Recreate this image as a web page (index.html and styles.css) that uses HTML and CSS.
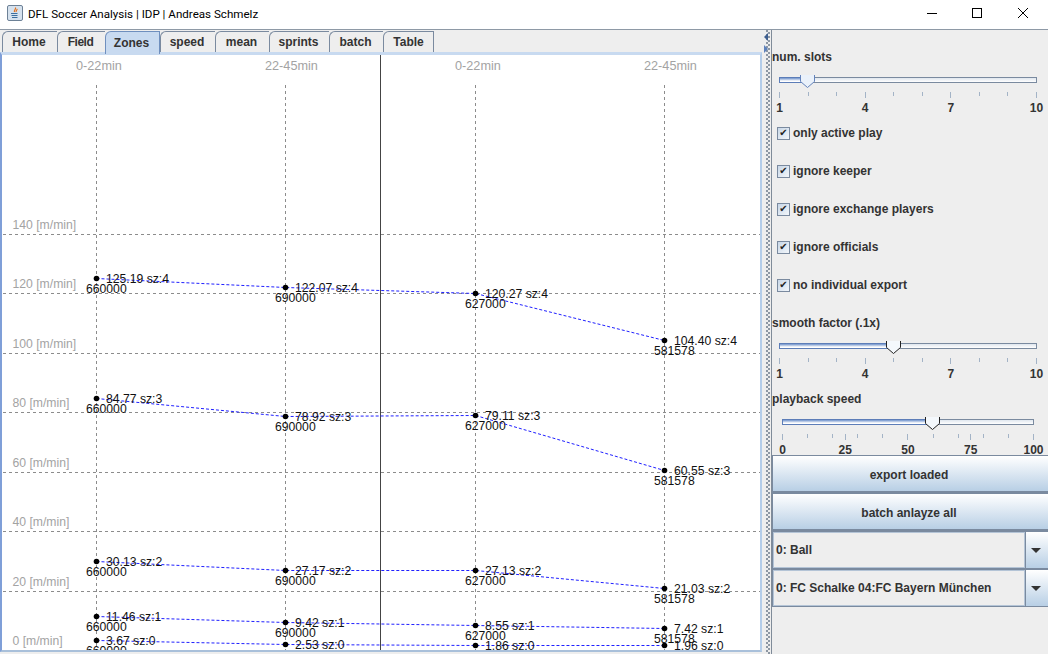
FILE: index.html
```html
<!DOCTYPE html>
<html lang="en">
<head>
    <meta charset="UTF-8">
    <meta name="viewport" content="width=device-width, initial-scale=1.0">
    <title>DFL Soccer Analysis | IDP | Andreas Schmelz</title>
    <link rel="stylesheet" href="styles.css">
</head>
<body>
    <!-- Window title bar -->
    <header class="titlebar">
        <svg class="app-icon" width="16" height="16" viewBox="0 0 16 16">
            <rect x="0.5" y="0.5" width="15" height="15" rx="1.5" fill="#d6e2ee" stroke="#6d8196"/>
            <path d="M8.5 2.5c1 1.5-2 2.5-1 4.5M10 4c.5 1-1.5 1.5-.8 3" fill="none" stroke="#e2701c" stroke-width="1.2"/>
            <path d="M4 8.5h6.5M4.5 10.5h6M5 12.5h5.5" stroke="#3c6f9e" stroke-width="1.1"/>
        </svg>
        <span class="app-title">DFL Soccer Analysis | IDP | Andreas Schmelz</span>
        <div class="window-buttons">
            <svg width="12" height="12" viewBox="0 0 12 12"><path d="M1 6.5h10" stroke="#000"/></svg>
            <svg width="12" height="12" viewBox="0 0 12 12"><rect x="1.5" y="1.5" width="9" height="9" fill="none" stroke="#000"/></svg>
            <svg class="close-icon" width="12" height="12" viewBox="0 0 12 12"><path d="M1 1l10 10M11 1L1 11" stroke="#000"/></svg>
        </div>
    </header>

    <div class="app">
        <!-- Left: tabs with chart -->
        <div class="tab-pane">
            <nav class="tabs">
                <span class="tab tab-home">Home</span>
                <span class="tab tab-field">Field</span>
                <span class="tab tab-zones active">Zones</span>
                <span class="tab tab-speed">speed</span>
                <span class="tab tab-mean">mean</span>
                <span class="tab tab-sprints">sprints</span>
                <span class="tab tab-batch">batch</span>
                <span class="tab tab-table">Table</span>
            </nav>
            <div class="tab-body">
                <svg class="chart" viewBox="2 55 758 595">
                    <g class="grid">
                        <path d="M3 234.5H760M3 293.5H760M3 353.5H760M3 412.5H760M3 472.5H760M3 531.5H760M3 591.5H760M3 650.5H760"/>
                        <path d="M96.5 85V650M285.5 85V650M475.5 85V650M664.5 85V650"/>
                    </g>
                    <path class="divider-line" d="M380.5 55V650"/>

                    <g class="columns">
                        <text x="76" y="70">0-22min</text>
                        <text x="265" y="70">22-45min</text>
                        <text x="455" y="70">0-22min</text>
                        <text x="644" y="70">22-45min</text>
                    </g>
                    <g class="axis">
                        <text x="12.5" y="229">140 [m/min]</text>
                        <text x="12.5" y="288">120 [m/min]</text>
                        <text x="12.5" y="348">100 [m/min]</text>
                        <text x="12.5" y="407">80 [m/min]</text>
                        <text x="12.5" y="467">60 [m/min]</text>
                        <text x="12.5" y="526">40 [m/min]</text>
                        <text x="12.5" y="586">20 [m/min]</text>
                        <text x="12.5" y="645">0 [m/min]</text>
                    </g>

                    <g class="series">
                        <polyline points="96.5,278.5 285.5,287.5 475.5,293.5 664.5,340.5"/>
                        <polyline points="96.5,398.5 285.5,416.5 475.5,415.5 664.5,470.5"/>
                        <polyline points="96.5,561.5 285.5,570.5 475.5,570.5 664.5,588.5"/>
                        <polyline points="96.5,616.5 285.5,622.5 475.5,625.5 664.5,628.5"/>
                        <polyline points="96.5,640.5 285.5,644.5 475.5,645.5 664.5,645.5"/>
                    </g>

                    <g class="dots">
                        <circle cx="96.5" cy="278.5" r="2.8"/><circle cx="285.5" cy="287.5" r="2.8"/><circle cx="475.5" cy="293.5" r="2.8"/><circle cx="664.5" cy="340.5" r="2.8"/>
                        <circle cx="96.5" cy="398.5" r="2.8"/><circle cx="285.5" cy="416.5" r="2.8"/><circle cx="475.5" cy="415.5" r="2.8"/><circle cx="664.5" cy="470.5" r="2.8"/>
                        <circle cx="96.5" cy="561.5" r="2.8"/><circle cx="285.5" cy="570.5" r="2.8"/><circle cx="475.5" cy="570.5" r="2.8"/><circle cx="664.5" cy="588.5" r="2.8"/>
                        <circle cx="96.5" cy="616.5" r="2.8"/><circle cx="285.5" cy="622.5" r="2.8"/><circle cx="475.5" cy="625.5" r="2.8"/><circle cx="664.5" cy="628.5" r="2.8"/>
                        <circle cx="96.5" cy="640.5" r="2.8"/><circle cx="285.5" cy="644.5" r="2.8"/><circle cx="475.5" cy="645.5" r="2.8"/><circle cx="664.5" cy="645.5" r="2.8"/>
                    </g>

                    <g class="values">
                        <text x="106" y="283">125.19 sz:4</text><text x="86" y="293">660000</text>
                        <text x="295" y="292">122.07 sz:4</text><text x="275" y="302">690000</text>
                        <text x="485" y="298">120.27 sz:4</text><text x="465" y="308">627000</text>
                        <text x="674" y="345">104.40 sz:4</text><text x="654" y="355">581578</text>

                        <text x="106" y="403">84.77 sz:3</text><text x="86" y="413">660000</text>
                        <text x="295" y="421">78.92 sz:3</text><text x="275" y="431">690000</text>
                        <text x="485" y="420">79.11 sz:3</text><text x="465" y="430">627000</text>
                        <text x="674" y="475">60.55 sz:3</text><text x="654" y="485">581578</text>

                        <text x="106" y="566">30.13 sz:2</text><text x="86" y="576">660000</text>
                        <text x="295" y="575">27.17 sz:2</text><text x="275" y="585">690000</text>
                        <text x="485" y="575">27.13 sz:2</text><text x="465" y="585">627000</text>
                        <text x="674" y="593">21.03 sz:2</text><text x="654" y="603">581578</text>

                        <text x="106" y="621">11.46 sz:1</text><text x="86" y="631">660000</text>
                        <text x="295" y="627">9.42 sz:1</text><text x="275" y="637">690000</text>
                        <text x="485" y="630">8.55 sz:1</text><text x="465" y="640">627000</text>
                        <text x="674" y="633">7.42 sz:1</text><text x="654" y="643">581578</text>

                        <text x="106" y="645">3.67 sz:0</text><text x="86" y="655">660000</text>
                        <text x="295" y="649">2.53 sz:0</text><text x="275" y="659">690000</text>
                        <text x="485" y="650">1.86 sz:0</text>
                        <text x="674" y="650">1.96 sz:0</text>
                    </g>
                </svg>
            </div>
        </div>

        <!-- Split pane divider -->
        <div class="splitter">
            <span class="arrow-left"></span>
            <span class="arrow-right"></span>
        </div>

        <!-- Right: settings -->
        <aside class="side">
            <div class="label label-slots">num. slots</div>
            <div class="slider slider-wide">
                <div class="track">
                    <div class="fill" style="width: 11.11%"></div>
                    <svg class="thumb focused" style="left: 11.11%" width="15" height="13" viewBox="0 0 15 13"><path d="M.5 0V6.5L7.5 12.5L14.5 6.5V0"/></svg>
                </div>
                <div class="ticks">
                    <i class="major"></i><i></i><i></i><i class="major"></i><i></i><i></i><i class="major"></i><i></i><i></i><i class="major"></i>
                </div>
                <div class="tick-labels"><b>1</b><b>4</b><b>7</b><b>10</b></div>
            </div>

            <div class="checks">
                <label class="check"><span class="box">&#10004;</span>only active play</label>
                <label class="check"><span class="box">&#10004;</span>ignore keeper</label>
                <label class="check"><span class="box">&#10004;</span>ignore exchange players</label>
                <label class="check"><span class="box">&#10004;</span>ignore officials</label>
                <label class="check"><span class="box">&#10004;</span>no individual export</label>
            </div>

            <div class="label label-smooth">smooth factor (.1x)</div>
            <div class="slider slider-wide">
                <div class="track">
                    <div class="fill" style="width: 44.44%"></div>
                    <svg class="thumb" style="left: 44.44%" width="15" height="13" viewBox="0 0 15 13"><path d="M.5 0V6.5L7.5 12.5L14.5 6.5V0"/></svg>
                </div>
                <div class="ticks">
                    <i class="major"></i><i></i><i></i><i class="major"></i><i></i><i></i><i class="major"></i><i></i><i></i><i class="major"></i>
                </div>
                <div class="tick-labels"><b>1</b><b>4</b><b>7</b><b>10</b></div>
            </div>

            <div class="label label-playback">playback speed</div>
            <div class="slider slider-narrow">
                <div class="track">
                    <div class="fill" style="width: 60%"></div>
                    <svg class="thumb" style="left: 60%" width="15" height="13" viewBox="0 0 15 13"><path d="M.5 0V6.5L7.5 12.5L14.5 6.5V0"/></svg>
                </div>
                <div class="ticks">
                    <i class="major"></i><i class="off"></i><i></i><i class="off"></i><i></i><i class="major"></i><i></i><i class="off"></i><i></i><i class="off"></i><i class="major"></i><i class="off"></i><i></i><i class="off"></i><i></i><i class="major"></i><i></i><i class="off"></i><i></i><i class="off"></i><i class="major"></i>
                </div>
                <div class="tick-labels"><b>0</b><b>25</b><b>50</b><b>75</b><b>100</b></div>
            </div>

            <button class="btn btn-first" type="button">export loaded</button>
            <button class="btn" type="button">batch anlayze all</button>

            <div class="combo">
                <span class="combo-value">0: Ball</span>
                <span class="combo-arrow"><span class="triangle"></span></span>
            </div>
            <div class="combo">
                <span class="combo-value">0: FC Schalke 04:FC Bayern München</span>
                <span class="combo-arrow"><span class="triangle"></span></span>
            </div>
        </aside>
    </div>
</body>
</html>
```

FILE: styles.css
```css
* {
    box-sizing: border-box;
}
html, body {
    height: 100%;
}
body {
    margin: 0;
    padding: 0;
    overflow: hidden;
    display: flex;
    flex-direction: column;
    background: #eeeeee;
    font-family: "Liberation Sans", Arial, sans-serif;
    font-size: 12px;
    color: #333333;
}

/* title bar */
.titlebar {
    height: 30px;
    flex: none;
    display: flex;
    align-items: center;
    padding: 0 0 3px 7px;
    background: #ffffff;
    border-bottom: 1px solid #8e99a6;
}
.app-icon {
    flex: none;
}
.app-title {
    margin: 1px 0 0 5px;
    font-family: Roboto, "Noto Sans", sans-serif;
    font-size: 11.6px;
    color: #000000;
}
.window-buttons {
    margin-left: auto;
    width: 122px;
    display: flex;
    gap: 33px;
}
.close-icon {
    margin-left: 1px;
}

/* main split */
.app {
    flex: 1;
    min-height: 0;
    display: flex;
}
.tab-pane {
    width: 763px;
    flex: none;
    display: flex;
    flex-direction: column;
    padding: 1px 0 2px 0;
}
.tabs {
    height: 21px;
    flex: none;
    display: flex;
    padding-left: 2px;
    position: relative;
    z-index: 1;
}
.tab {
    height: 21px;
    display: flex;
    align-items: center;
    justify-content: center;
    padding-right: 2px;
    font-weight: bold;
    background: #eeeeee;
    border: 1px solid #7a8a9f;
    border-bottom: none;
    border-right: none;
    border-radius: 6px 0 0 0;
}
.tab-home { width: 55px; }
.tab-field { width: 48px; letter-spacing: -0.5px; }
.tab-zones { width: 55px; }
.tab-speed { width: 55px; }
.tab-mean { width: 54px; }
.tab-sprints { width: 60px; }
.tab-batch { width: 54px; }
.tab-table { width: 51px; padding-right: 0; border-right: 1px solid #7a8a9f; }
.tab.active {
    height: 23px;
    margin-bottom: -2px;
    background: #c8daf0;
    border-color: #6f8fbe;
    border-right: 1px solid #6f8fbe;
}
.tab-body {
    flex: 1;
    min-height: 0;
    margin-right: 1px;
    background: #ffffff;
    border: 2px solid #b4cde9;
    border-left: 2px solid #7f9fd8;
    border-top: 3px solid #c8daf0;
    border-bottom: 2px solid #a9c0da;
    overflow: hidden;
}
.chart {
    display: block;
    width: 758px;
    height: 595px;
    overflow: hidden;
}
.grid path {
    fill: none;
    stroke: #8c8c8c;
    stroke-dasharray: 3 3;
}
.divider-line {
    stroke: #444444;
    fill: none;
}
.columns text {
    fill: #a3a3a3;
    font-size: 12.7px;
}
.axis text {
    fill: #a3a3a3;
    font-size: 12.2px;
}
.series polyline {
    fill: none;
    stroke: #2020ff;
    stroke-dasharray: 3 2;
}
.dots circle {
    fill: #000000;
}
.values text {
    fill: #111111;
    font-size: 12.2px;
}

/* split pane divider */
.splitter {
    width: 9px;
    flex: none;
    position: relative;
    background-color: #eeeeee;
    background-image: radial-gradient(circle at 1px 1px, #8d97a3 0.8px, transparent 1px),
                      radial-gradient(circle at 1px 1px, #8d97a3 0.8px, transparent 1px);
    background-size: 2px 4px;
    background-position: 3px 0, 5px 2px;
    background-repeat: repeat-y;
    border-right: 1px solid #7f8b99;
}
.arrow-left,
.arrow-right {
    position: absolute;
    width: 0;
    height: 0;
    left: 1px;
    border-top: 4px solid transparent;
    border-bottom: 4px solid transparent;
}
.arrow-left {
    top: 3px;
    border-right: 4px solid #3e5f8f;
}
.arrow-right {
    top: 15px;
    border-left: 4px solid #5f82bb;
}

/* settings panel */
.side {
    flex: 1;
    min-width: 0;
    display: flex;
    flex-direction: column;
    background: #eeeeee;
}
.label {
    height: 14px;
    line-height: 14px;
    font-weight: bold;
}
.label-slots { margin-top: 20px; }
.label-smooth { margin-top: 24px; }
.label-playback { margin-top: 11px; }

.slider {
    flex: none;
}
.slider-wide {
    margin: 13px 0 0 7px;
    width: 258px;
}
.slider-narrow {
    margin: 13px 0 0 10px;
    width: 252px;
}
.track {
    height: 6px;
    position: relative;
    border: 1px solid #7a8a9f;
    background: linear-gradient(#dfe6ee, #ffffff);
}
.fill {
    height: 100%;
    background: linear-gradient(#6f92cc, #ffffff 75%);
    outline: 1px solid #5c7db8;
}
.thumb {
    position: absolute;
    top: -3px;
    margin-left: -8px;
    overflow: visible;
}
.thumb path {
    fill: #f4f8fc;
    stroke: #222222;
}
.thumb.focused path {
    fill: #eaf1fa;
    stroke: #6483bb;
}
.ticks {
    display: flex;
    justify-content: space-between;
    margin-top: 9px;
    height: 6px;
}
.ticks i {
    width: 1px;
    height: 4px;
    background: #a3b3c6;
}
.ticks i.major {
    height: 6px;
}
.ticks i.off {
    visibility: hidden;
}
.tick-labels {
    display: flex;
    justify-content: space-between;
    margin-top: 3px;
    height: 14px;
    line-height: 14px;
}
.tick-labels b {
    width: 1px;
    display: flex;
    justify-content: center;
}

.checks {
    display: flex;
    flex-direction: column;
    gap: 24px;
    margin-top: 11px;
    padding-left: 5px;
}
.check {
    height: 14px;
    display: flex;
    align-items: center;
    font-weight: bold;
}
.box {
    width: 13px;
    height: 13px;
    margin-right: 3px;
    display: flex;
    align-items: center;
    justify-content: center;
    font-size: 10px;
    line-height: 1;
    font-family: "DejaVu Sans", sans-serif;
    font-weight: normal;
    color: #222222;
    background: linear-gradient(135deg, #c8d7e8, #f2f6fa);
    border: 1px solid #7a8a9f;
}

.btn {
    height: 38px;
    flex: none;
    padding: 2px 3px 0 0;
    font-family: inherit;
    font-size: 12px;
    font-weight: bold;
    color: #333333;
    background: linear-gradient(#ffffff, #b8cfe5);
    border: 1px solid #7a8a9f;
    border-bottom-width: 2px;
    border-right: none;
    border-radius: 0;
}
.btn-first {
    margin-top: -2px;
    position: relative;
}
.combo {
    height: 38px;
    flex: none;
    display: flex;
    border: 1px solid #7a8a9f;
    border-right: none;
}
.combo-value {
    flex: 1;
    display: flex;
    align-items: center;
    padding-left: 2px;
    font-weight: bold;
    background: #eeeeee;
    border: 1px solid #b4c4d6;
}
.combo-arrow {
    width: 23px;
    flex: none;
    display: flex;
    align-items: center;
    justify-content: center;
    padding-right: 3px;
    background: linear-gradient(#ffffff, #b8cfe5);
    border-left: 1px solid #7a8a9f;
}
.triangle {
    width: 0;
    height: 0;
    border-left: 5px solid transparent;
    border-right: 5px solid transparent;
    border-top: 5px solid #333333;
}
```
